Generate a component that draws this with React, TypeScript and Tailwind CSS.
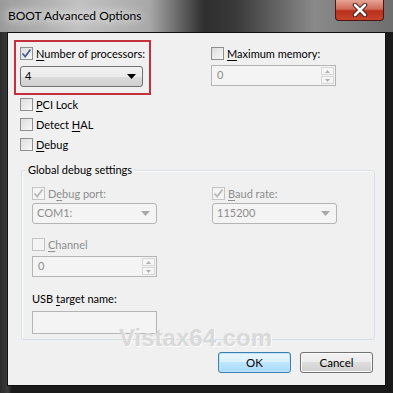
import React from 'react'

const font = { fontFamily: 'Lato, "Open Sans", "Liberation Sans", sans-serif' }

function Check({ checked, disabled }: { checked?: boolean; disabled?: boolean }) {
  return (
    <div
      className={`w-[13px] h-[13px] shrink-0 border flex items-center justify-center ${
        disabled ? 'border-[#c4c4c4] bg-[#f4f4f4]' : 'border-[#8e8f8f] bg-[linear-gradient(135deg,#dcdcdc,#f8f8f8)]'
      }`}
    >
      {checked && (
        <svg width="11" height="11" viewBox="0 0 11 11">
          <path
            d="M1.5 5.5 L4.2 8.5 L9.5 1.5"
            fill="none"
            stroke={disabled ? '#b8b8b8' : '#4a5f97'}
            strokeWidth="1.8"
          />
        </svg>
      )}
    </div>
  )
}

function CheckRow({
  label,
  u,
  checked,
  disabled,
}: {
  label: string
  u: number
  checked?: boolean
  disabled?: boolean
}) {
  return (
    <div className={`flex items-center gap-[3px] h-[13px] ${disabled ? 'text-[#8d8d8d]' : 'text-black'}`}>
      <Check checked={checked} disabled={disabled} />
      <span className="text-[11px] leading-none whitespace-pre">
        {label.slice(0, u)}
        <span className="underline underline-offset-2">{label[u]}</span>
        {label.slice(u + 1)}
      </span>
    </div>
  )
}

function Combo({ value, disabled, w }: { value: string; disabled?: boolean; w: string }) {
  return (
    <div
      className={`${w} h-[21px] rounded-[3px] border flex items-center justify-between pl-[4px] pr-[6px] text-[11px] ${
        disabled
          ? 'border-[#b5b5b5] bg-[#f4f4f4] text-[#8d8d8d]'
          : 'border-[#707070] bg-[linear-gradient(#f2f2f2,#ebebeb_50%,#dddddd_50%,#cfcfcf)] text-black'
      }`}
    >
      <span>{value}</span>
      <svg width="9" height="5" viewBox="0 0 9 5">
        <path d="M0 0 H9 L4.5 5 Z" fill={disabled ? '#a8a8a8' : '#000'} />
      </svg>
    </div>
  )
}

function Spin({ value, w }: { value: string; w: string }) {
  return (
    <div className={`${w} h-[21px] border border-[#b5b5b5] bg-[#f4f4f4] flex items-stretch text-[11px] text-[#8d8d8d]`}>
      <span className="flex-1 pl-[5px] flex items-center">{value}</span>
      <div className="w-[15px] flex flex-col gap-[1px] p-[1px]">
        <div className="flex-1 border border-[#d6d6d6] bg-[#f6f6f6] flex items-center justify-center">
          <svg width="5" height="3" viewBox="0 0 5 3">
            <path d="M0 3 L2.5 0 L5 3 Z" fill="#b0b0b0" />
          </svg>
        </div>
        <div className="flex-1 border border-[#d6d6d6] bg-[#f6f6f6] flex items-center justify-center">
          <svg width="5" height="3" viewBox="0 0 5 3">
            <path d="M0 0 L2.5 3 L5 0 Z" fill="#b0b0b0" />
          </svg>
        </div>
      </div>
    </div>
  )
}

function Button({ label, focused }: { label: string; focused?: boolean }) {
  return (
    <div
      className={`w-[73px] h-[21px] rounded-[3px] border flex items-center justify-center text-[11.5px] text-black ${
        focused
          ? 'border-[#3c7fb1] bg-[linear-gradient(#eaf6fd,#d9f0fc_50%,#bee6fd_50%,#a7d9f5)] shadow-[inset_0_0_0_1px_#bfe3f7]'
          : 'border-[#707070] bg-[linear-gradient(#f2f2f2,#ebebeb_50%,#dddddd_50%,#cfcfcf)] shadow-[inset_0_0_0_1px_#fbfbfb]'
      }`}
    >
      {label}
    </div>
  )
}

export default function App() {
  return (
    <div style={font} className="w-[393px] h-[393px] bg-[#1c1c1c] flex flex-col overflow-hidden">
      {/* title bar */}
      <div className="h-[32px] shrink-0 flex items-start justify-between bg-[linear-gradient(90deg,#9a9a9a_0%,#c2c2c2_20%,#a8a8a8_38%,#2e2e2e_52%,#3a3a3a_60%,#8a8a8a_80%,#6e6e6e_100%)]">
        <span className="ml-[8px] mt-[7px] text-[12px] text-black [text-shadow:0_0_8px_#ffffff,0_0_14px_#ffffff]">
          BOOT Advanced Options
        </span>
        <div className="mr-[9px] w-[49px] h-[21px] rounded-b-[4px] border border-t-0 border-[#4a1414] bg-[linear-gradient(#e6a596,#d06a55_45%,#b8301c_55%,#c8442a)] flex items-center justify-center">
          <svg width="16" height="14" viewBox="0 0 16 14">
            <path d="M3 2 L13 12 M13 2 L3 12" stroke="#3a1410" strokeWidth="4.5" strokeLinecap="round" />
            <path d="M3 2 L13 12 M13 2 L3 12" stroke="#ffffff" strokeWidth="2.6" strokeLinecap="round" />
          </svg>
        </div>
      </div>

      {/* body frame */}
      <div className="flex-1 flex px-[7px] pb-[7px] bg-[linear-gradient(90deg,#2a2a2a,#3c3c3c_2%,#1a1a1a_3%)]">
        <div className="relative flex-1 border border-[#101010] bg-[#f0f0f0] text-[11px] flex flex-col">
          {/* top */}
          <div className="flex mt-[7px] ml-[6px]">
            <div className="w-[137px] h-[55px] border-2 border-[#c4313c] px-[4px] pt-[5px] flex flex-col gap-[6px]">
              <CheckRow label="Number of processors:" u={0} checked />
              <Combo value="4" w="w-[123px]" />
            </div>
            <div className="ml-[60px] pt-[7px] flex flex-col gap-[5px]">
              <CheckRow label="Maximum memory:" u={0} />
              <Spin value="0" w="w-[125px]" />
            </div>
          </div>

          <div className="ml-[12px] mt-[3px] flex flex-col gap-[7px]">
            <CheckRow label="PCI Lock" u={0} />
            <CheckRow label="Detect HAL" u={7} />
            <CheckRow label="Debug" u={0} />
          </div>

          {/* group box */}
          <div className="relative mt-[19px] ml-[13px] w-[354px] h-[170px] border border-[#d5dfe5] rounded-[3px] shadow-[inset_1px_1px_0_#ffffff]">
            <span className="absolute -top-[9px] left-[4px] px-[2px] bg-[#f0f0f0] text-[11px] leading-[16px] text-black">
              Global debug settings
            </span>
            <div className="flex pt-[16px] pl-[10px]">
              <div className="w-[180px] flex flex-col">
                <CheckRow label="Debug port:" u={1} checked disabled />
                <div className="mt-[3px]">
                  <Combo value="COM1:" disabled w="w-[125px]" />
                </div>
                <div className="mt-[14px]">
                  <CheckRow label="Channel" u={0} disabled />
                </div>
                <div className="mt-[5px]">
                  <Spin value="0" w="w-[125px]" />
                </div>
                <div className="mt-[14px] leading-[16px] text-black whitespace-pre">
                  USB <span className="underline underline-offset-2">t</span>arget name:
                </div>
                <div className="mt-[4px] w-[125px] h-[23px] border border-[#b5b5b5] bg-[#f4f4f4]" />
              </div>
              <div className="flex flex-col">
                <CheckRow label="Baud rate:" u={0} checked disabled />
                <div className="mt-[3px]">
                  <Combo value="115200" disabled w="w-[125px]" />
                </div>
              </div>
            </div>
          </div>

          {/* watermark */}
          <div
            style={{ fontFamily: '"Liberation Sans", Arial, sans-serif' }}
            className="absolute left-[111px] top-[293px] text-[24px] font-bold text-[#d9d9d9] leading-none [text-shadow:1px_1px_0_#fafafa]"
          >
            Vistax64.com
          </div>

          <div className="mt-auto mb-[12px] flex justify-end gap-[9px] pr-[12px]">
            <Button label="OK" focused />
            <Button label="Cancel" />
          </div>
        </div>
      </div>
    </div>
  )
}
